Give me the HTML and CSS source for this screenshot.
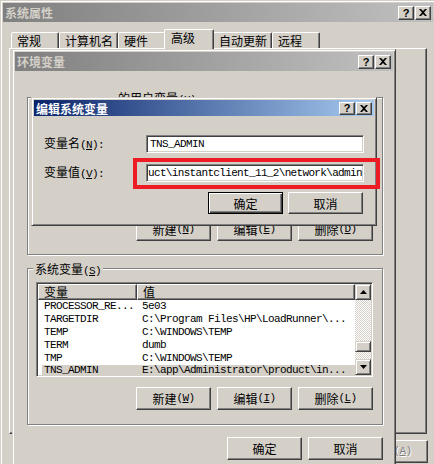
FILE: index.html
```html
<!DOCTYPE html>
<html lang="zh-CN">
<head>
<meta charset="utf-8">
<title>编辑系统变量</title>
<link rel="stylesheet" href="styles.css">
</head>
<body>
<div class="desk">

  <div class="win outer">
    <div class="title inactive">
      <span class="ttext">系统属性</span>
      <span class="tbtns">
        <span class="tb"><span class="q">?</span></span>
        <span class="tb"><svg width="8" height="7" viewBox="0 0 8 7"><path d="M0 0h2l2 2 2-2h2L5 3.5 8 7H6L4 5 2 7H0l3-3.5z" fill="#000"/></svg></span>
      </span>
    </div>
    <div class="tabs">
      <div class="tab">常规</div>
      <div class="tab">计算机名</div>
      <div class="tab">硬件</div>
      <div class="tab sel">高级</div>
      <div class="tab">自动更新</div>
      <div class="tab">远程</div>
    </div>
    <div class="tabpanel"></div>
    <div class="outer-btns">
      <div class="btn dis">应用<span class="en">(<u>A</u>)</span></div>
    </div>
  </div>

  <div class="win env">
    <div class="title inactive">
      <span class="ttext">环境变量</span>
      <span class="tbtns">
        <span class="tb"><span class="q">?</span></span>
        <span class="tb"><svg width="8" height="7" viewBox="0 0 8 7"><path d="M0 0h2l2 2 2-2h2L5 3.5 8 7H6L4 5 2 7H0l3-3.5z" fill="#000"/></svg></span>
      </span>
    </div>
    <div class="group user">
      <div class="glabel ulabel">的用户变量<span class="en">(<u>U</u>)</span></div>
      <div class="gspace"></div>
      <div class="brow">
        <div class="btn">新建<span class="en">(<u>N</u>)</span></div>
        <div class="btn">编辑<span class="en">(<u>E</u>)</span></div>
        <div class="btn">删除<span class="en">(<u>D</u>)</span></div>
      </div>
    </div>
    <div class="group sys">
      <div class="glabel">系统变量<span class="en">(<u>S</u>)</span></div>
      <div class="list">
        <div class="lv">
          <div class="lhead">
            <div class="hc c1">变量</div>
            <div class="hc c2">值</div>
          </div>
          <div class="row"><span class="c1">PROCESSOR_RE...</span><span class="c2">5e03</span></div>
          <div class="row"><span class="c1">TARGETDIR</span><span class="c2">C:\Program Files\HP\LoadRunner\...</span></div>
          <div class="row"><span class="c1">TEMP</span><span class="c2">C:\WINDOWS\TEMP</span></div>
          <div class="row"><span class="c1">TERM</span><span class="c2">dumb</span></div>
          <div class="row"><span class="c1">TMP</span><span class="c2">C:\WINDOWS\TEMP</span></div>
          <div class="row sel"><span class="c1">TNS_ADMIN</span><span class="c2">E:\app\Administrator\product\in...</span></div>
        </div>
        <div class="sb">
          <div class="sbtn"><svg width="7" height="4" viewBox="0 0 7 4"><path d="M3.5 0 7 4H0z" fill="#000"/></svg></div>
          <div class="track"><div class="thumb"></div></div>
          <div class="sbtn"><svg width="7" height="4" viewBox="0 0 7 4"><path d="M0 0h7L3.5 4z" fill="#000"/></svg></div>
        </div>
      </div>
      <div class="brow">
        <div class="btn">新建<span class="en">(<u>W</u>)</span></div>
        <div class="btn">编辑<span class="en">(<u>I</u>)</span></div>
        <div class="btn">删除<span class="en">(<u>L</u>)</span></div>
      </div>
    </div>
    <div class="brow bottom">
      <div class="btn">确定</div>
      <div class="btn">取消</div>
    </div>
  </div>

  <div class="win edit">
    <div class="title active small">
      <span class="ttext">编辑系统变量</span>
      <span class="tbtns">
        <span class="tb"><span class="q">?</span></span>
        <span class="tb"><svg width="8" height="7" viewBox="0 0 8 7"><path d="M0 0h2l2 2 2-2h2L5 3.5 8 7H6L4 5 2 7H0l3-3.5z" fill="#000"/></svg></span>
      </span>
    </div>
    <div class="field first">
      <span class="flabel">变量名<span class="en">(<u>N</u>):</span></span>
      <div class="input">TNS_ADMIN</div>
    </div>
    <div class="field">
      <span class="flabel">变量值<span class="en">(<u>V</u>):</span></span>
      <div class="input value">uct\instantclient_11_2\network\admin</div>
    </div>
    <div class="brow edit-btns">
      <div class="btn def">确定</div>
      <div class="btn">取消</div>
    </div>
  </div>

  <div class="redbox"></div>
</div>
</body>
</html>
```

FILE: styles.css
```css
* { box-sizing: border-box; margin: 0; padding: 0; }

body {
  margin: 0;
  background: #e4ebf2;
  font: 12px/13px "Noto Sans CJK SC", sans-serif;
  color: #000;
  overflow: hidden;
}

.desk {
  position: relative;
  width: 434px;
  height: 464px;
  overflow: hidden;
}

.en {
  font-family: "Liberation Mono", monospace;
  font-size: 11px;
  letter-spacing: -0.6px;
}

/* windows */
.win {
  position: absolute;
  display: flex;
  flex-direction: column;
  background: #d4d0c8;
  border: 1px solid;
  border-color: #d4d0c8 #404040 #404040 #d4d0c8;
  box-shadow: inset 1px 1px #fff, inset -1px -1px #808080;
  padding: 2px;
}

.outer { left: 0; top: 0; width: 436px; height: 470px; }
.env { left: 12px; top: 49px; width: 384px; height: 430px; }
.edit { left: 31px; top: 97px; width: 346px; height: 129px; }

.title {
  height: 19px;
  flex: none;
  display: flex;
  align-items: center;
  justify-content: space-between;
  padding: 0 2px;
  font-weight: 700;
}
.title.small { height: 16px; }
.inactive { background: linear-gradient(to right, #808080, #c0c0c0); color: #d4d0c8; }
.active { background: linear-gradient(to right, #0a246a, #a6caf0); color: #fff; }

.tbtns { display: flex; gap: 1px; }
.tb {
  width: 16px;
  height: 14px;
  display: flex;
  align-items: center;
  justify-content: center;
  background: #d4d0c8;
  border: 1px solid;
  border-color: #fff #404040 #404040 #fff;
  box-shadow: inset -1px -1px #808080;
}
.small .tb { height: 13px; }
.q {
  font: 700 11px/1 "Liberation Sans", sans-serif;
  color: #000;
  margin-top: 1px;
}

/* tabs */
.tabs {
  flex: none;
  display: flex;
  align-items: flex-end;
  height: 19px;
  margin-top: 7px;
  padding-left: 8px;
}
.tab {
  height: 16px;
  min-width: 48px;
  padding: 1px 4px 0 5px;
  border: 1px solid;
  border-bottom: 0;
  border-color: #fff #404040 transparent #fff;
  border-radius: 2px 2px 0 0;
  box-shadow: inset -1px 0 #808080;
  line-height: 14px;
  background: #d4d0c8;
}
.tab.sel {
  position: relative;
  z-index: 1;
  height: 20px;
  min-width: 50px;
  margin: 0 -1px -1px -2px;
  padding-top: 1px;
  padding-left: 6px;
  line-height: 14px;
}
.tabpanel {
  flex: none;
  margin-left: 6px;
  width: 418px;
  height: 386px;
  border: 1px solid;
  border-color: #fff #404040 #404040 #fff;
  box-shadow: inset -1px -1px #808080;
}
.outer-btns {
  flex: none;
  display: flex;
  justify-content: flex-end;
  margin-top: 6px;
  width: 430px;
  padding-right: 5px;
}

/* buttons */
.btn {
  flex: none;
  width: 75px;
  height: 23px;
  display: flex;
  align-items: center;
  justify-content: center;
  background: #d4d0c8;
  border: 1px solid;
  border-color: #fff #404040 #404040 #fff;
  box-shadow: inset -1px -1px #808080;
}
.btn.def {
  border-color: #000;
  box-shadow: inset 1px 1px #fff, inset -1px -1px #404040, inset -2px -2px #808080;
}
.btn.dis { color: #808080; text-shadow: 1px 1px #fff; }

.brow {
  display: flex;
  justify-content: flex-end;
  gap: 6px;
  padding-right: 9px;
}

/* group boxes */
.group {
  flex: none;
  display: flex;
  flex-direction: column;
  margin-left: 12px;
  width: 356px;
  border: 1px solid #808080;
  box-shadow: inset 1px 1px #fff, 1px 1px #fff;
}
.user { margin-top: 26px; height: 158px; }
.sys { margin-top: 13px; height: 157px; }
.glabel {
  align-self: flex-start;
  margin: -7px 0 0 5px;
  padding: 0 2px;
  height: 13px;
  background: #d4d0c8;
  white-space: nowrap;
}
.ulabel { margin-left: 88px; }
.gspace { flex: 1; }
.user .brow { margin-bottom: 13px; }
.sys .brow { margin-top: 10px; }
.bottom { margin-top: 12px; padding-right: 10px; }

/* list view */
.list {
  display: flex;
  margin: 7px 0 0 8px;
  width: 337px;
  height: 95px;
  padding: 1px;
  background: #fff;
  border: 1px solid;
  border-color: #808080 #fff #fff #808080;
  box-shadow: inset 1px 1px #404040, inset -1px -1px #d4d0c8;
}
.lv { flex: 1; overflow: hidden; }
.lhead { display: flex; height: 16px; }
.hc {
  height: 16px;
  padding-left: 5px;
  line-height: 14px;
  background: #d4d0c8;
  border: 1px solid;
  border-color: #fff #404040 #404040 #fff;
  box-shadow: inset -1px -1px #808080;
}
.hc.c1 { width: 99px; }
.hc.c2 { flex: 1; }
.row {
  display: flex;
  height: 13px;
  line-height: 13px;
  font-family: "Liberation Mono", monospace;
  font-size: 11px;
  letter-spacing: -0.6px;
  white-space: nowrap;
}
.row .c1 { width: 99px; padding-left: 6px; flex: none; }
.row .c2 { padding-left: 5px; }
.row.sel { height: 11px; line-height: 11px; background: linear-gradient(to right, #fff 4px, #d4d0c8 4px); }

.sb { width: 16px; display: flex; flex-direction: column; }
.sbtn {
  height: 16px;
  flex: none;
  display: flex;
  align-items: center;
  justify-content: center;
  background: #d4d0c8;
  border: 1px solid;
  border-color: #d4d0c8 #404040 #404040 #d4d0c8;
  box-shadow: inset 1px 1px #fff, inset -1px -1px #808080;
}
.track {
  flex: 1;
  background: repeating-conic-gradient(#d4d0c8 0 25%, #fff 0 50%) 0 0 / 2px 2px;
}
.thumb {
  margin-top: 41px;
  height: 11px;
  background: #d4d0c8;
  border: 1px solid;
  border-color: #d4d0c8 #404040 #404040 #d4d0c8;
  box-shadow: inset 1px 1px #fff, inset -1px -1px #808080;
}

/* edit dialog */
.field {
  display: flex;
  align-items: center;
  padding-left: 10px;
  margin-top: 11px;
}
.field.first { margin-top: 19px; }
.flabel { width: 102px; white-space: nowrap; }
.input {
  width: 218px;
  height: 18px;
  padding: 2px 0 0 3px;
  background: #fff;
  border: 1px solid;
  border-color: #808080 #fff #fff #808080;
  box-shadow: inset 1px 1px #404040, inset -1px -1px #d4d0c8;
  font-family: "Liberation Mono", monospace;
  font-size: 11px;
  line-height: 13px;
  letter-spacing: -0.6px;
  white-space: nowrap;
  overflow: hidden;
}
.input.value { padding-left: 1px; letter-spacing: -0.66px; }
.edit-btns { margin-top: 10px; gap: 5px; padding-right: 11px; }
.edit-btns .btn { height: 22px; }

.redbox {
  position: absolute;
  left: 133px;
  top: 158px;
  width: 247px;
  height: 31px;
  border: 4px solid #ed1c24;
}
```
